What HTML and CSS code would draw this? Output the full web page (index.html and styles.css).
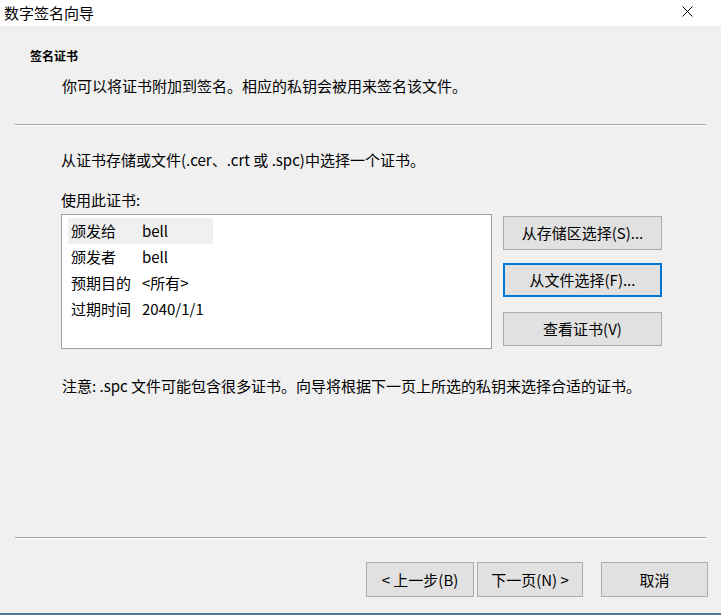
FILE: index.html
```html
<!DOCTYPE html>
<html lang="zh-CN">
<head>
<meta charset="utf-8">
<title>数字签名向导</title>
<link rel="stylesheet" href="styles.css">
</head>
<body>
<div class="window">
  <div class="titlebar">
    <span class="title">数字签名向导</span>
    <svg class="close" width="11" height="11" viewBox="0 0 11 11"><path d="M0.5 0.5 L10.5 10.5 M10.5 0.5 L0.5 10.5" stroke="#000" stroke-width="1" fill="none"/></svg>
  </div>
  <div class="header">
    <div class="h-title">签名证书</div>
    <div class="h-desc">你可以将证书附加到签名。相应的私钥会被用来签名该文件。</div>
  </div>
  <div class="sep"></div>
  <div class="content">
    <div class="line1">从证书存储或文件(.cer、.crt 或 .spc)中选择一个证书。</div>
    <div class="label">使用此证书:</div>
    <div class="pick">
      <div class="listbox">
        <div class="row sel"><span class="k">颁发给</span><span class="v">bell</span></div>
        <div class="row"><span class="k">颁发者</span><span class="v">bell</span></div>
        <div class="row"><span class="k">预期目的</span><span class="v">&lt;所有&gt;</span></div>
        <div class="row"><span class="k">过期时间</span><span class="v">2040/1/1</span></div>
      </div>
      <div class="side">
        <button class="btn b1">从存储区选择(S)...</button>
        <button class="btn b2 focus">从文件选择(F)...</button>
        <button class="btn b3">查看证书(V)</button>
      </div>
    </div>
    <div class="note">注意: .spc 文件可能包含很多证书。向导将根据下一页上所选的私钥来选择合适的证书。</div>
  </div>
  <div class="footer">
    <div class="sep"></div>
    <div class="btnrow">
      <button class="btn nav back">&lt; 上一步(B)</button>
      <button class="btn nav next">下一页(N) &gt;</button>
      <button class="btn nav cancel">取消</button>
    </div>
  </div>
  <div class="bottomline"></div>
</div>
</body>
</html>
```
FILE: styles.css
```css
* { box-sizing: border-box; }
html, body { margin: 0; padding: 0; }
body {
  width: 721px;
  height: 615px;
  overflow: hidden;
  background: #f0f0f0;
  font-family: "Noto Sans CJK SC", "Noto Sans", sans-serif;
  font-size: 15px;
  color: #000;
}
.window {
  display: flex;
  flex-direction: column;
  height: 615px;
}
.titlebar {
  height: 26px;
  background: #fff;
  display: flex;
  align-items: center;
  justify-content: space-between;
  padding-left: 4px;
  padding-right: 28px;
}
.title { font-size: 15px; line-height: 20px; }
.close { display: block; margin-top: -3px; }
.header { padding-top: 21px; }
.h-title {
  padding-left: 30px;
  font-size: 12px;
  font-weight: bold;
  line-height: 18px;
}
.h-desc {
  margin-top: 11px;
  padding-left: 62px;
  line-height: 20px;
}
.sep {
  margin: 28px 15px 0;
  height: 2px;
  border-top: 1px solid #a0a0a0;
  border-bottom: 1px solid #ffffff;
}
.content { padding-left: 61px; }
.line1 { margin-top: 24px; line-height: 20px; }
.label { margin-top: 20px; line-height: 20px; }
.pick {
  display: flex;
  margin-top: 4px;
  gap: 11px;
}
.listbox {
  width: 431px;
  height: 135px;
  background: #fff;
  border: 1px solid #a0a0a0;
  padding: 3px 0 0 6px;
}
.row {
  display: flex;
  height: 26px;
  align-items: center;
  width: 145px;
  padding-left: 3px;
  line-height: 20px;
  white-space: nowrap;
}
.row.sel { background: #f0f0f0; }
.k { width: 71px; flex: none; }
.side {
  display: flex;
  flex-direction: column;
  padding-top: 2px;
}
.btn {
  font-family: "Noto Sans CJK SC", "Noto Sans", sans-serif;
  font-size: 15px;
  color: #000;
  background: #e1e1e1;
  border: 1px solid #adadad;
  padding: 0;
  margin: 0;
  line-height: 20px;
  white-space: nowrap;
}
.side .btn { width: 159px; height: 34px; }
.side .b2 { margin-top: 13px; }
.side .b3 { margin-top: 15px; }
.btn.focus { border: 2px solid #0078d7; }
.note { margin-top: 27px; padding-left: 1px; line-height: 20px; }
.footer { margin-top: auto; }
.footer .sep { margin-top: 0; }
.btnrow {
  display: flex;
  justify-content: flex-end;
  padding-right: 13px;
  margin-top: 23px;
}
.btn.nav { height: 35px; width: 108px; }
.btn.next { margin-left: 3px; width: 106px; }
.btn.cancel { margin-left: 18px; width: 107px; }
.bottomline {
  margin-top: 16px;
  height: 2px;
  background: #56769c;
}
```
